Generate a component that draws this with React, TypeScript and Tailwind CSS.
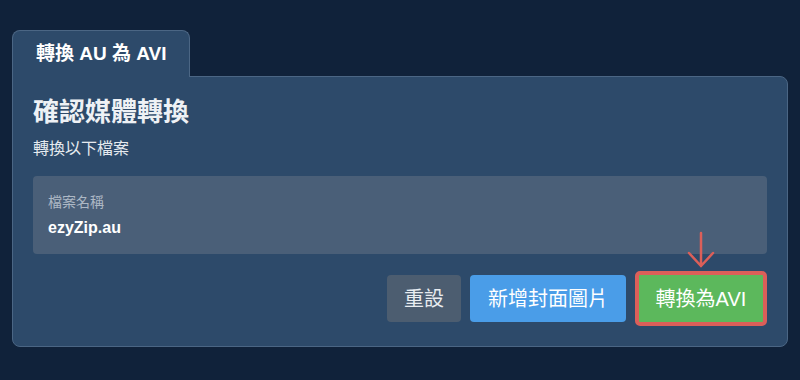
const font = { fontFamily: '"Liberation Sans", "Noto Sans CJK TC", sans-serif' };

export default function App() {
  return (
    <div className="h-[380px] w-[800px] bg-[#10223a] px-[12px] pt-[30px]" style={font}>
      <div className="relative z-10 -mb-px flex h-[47px] w-[178px] items-center rounded-t-[8px] border border-b-0 border-[#4b6684] bg-[#2d4a6a] pl-[23px]">
        <span className="text-[19px] font-bold text-white">轉換 AU 為 AVI</span>
      </div>
      <div className="rounded-b-[8px] rounded-tr-[8px] border border-[#4b6684] bg-[#2d4a6a] px-[20px] pb-[20px] pt-[19px]">
        <h1 className="text-[26px] font-bold leading-[32px] text-[#eef1f5]">確認媒體轉換</h1>
        <p className="mt-[9px] text-[16px] leading-[24px] text-[#e6eaef]">轉換以下檔案</p>

        <div className="mt-[15px] h-[78px] rounded-[4px] bg-[#4a5f78] px-[15px] pt-[16px]">
          <div className="text-[14px] leading-[20px] text-[#adb8c5]">檔案名稱</div>
          <div className="mt-[5px] text-[16px] font-bold leading-[22px] text-white">ezyZip.au</div>
        </div>

        <div className="mt-[17px] flex items-center justify-end gap-[9px]">
          <button className="h-[47px] w-[74px] shrink-0 rounded-[4px] bg-[#4c5d70] text-[20px] text-[#e8ecf0]">重設</button>
          <button className="h-[47px] w-[156px] shrink-0 rounded-[4px] bg-[#4a9de8] text-[20px] text-white">新增封面圖片</button>
          <div className="relative shrink-0">
            <svg className="absolute left-[52px] top-[-40px]" width="28" height="38" viewBox="0 0 28 38">
              <path d="M14 2 V35 M2 22 L14 35 L26 22" stroke="#db5f59" strokeWidth="2.5" fill="none" strokeLinecap="round" />
            </svg>
            <button className="h-[55px] w-[132px] rounded-[5px] border-4 border-[#db5f59] bg-[#5cb85c] text-[20px] text-white">轉換為AVI</button>
          </div>
        </div>
      </div>
    </div>
  );
}
